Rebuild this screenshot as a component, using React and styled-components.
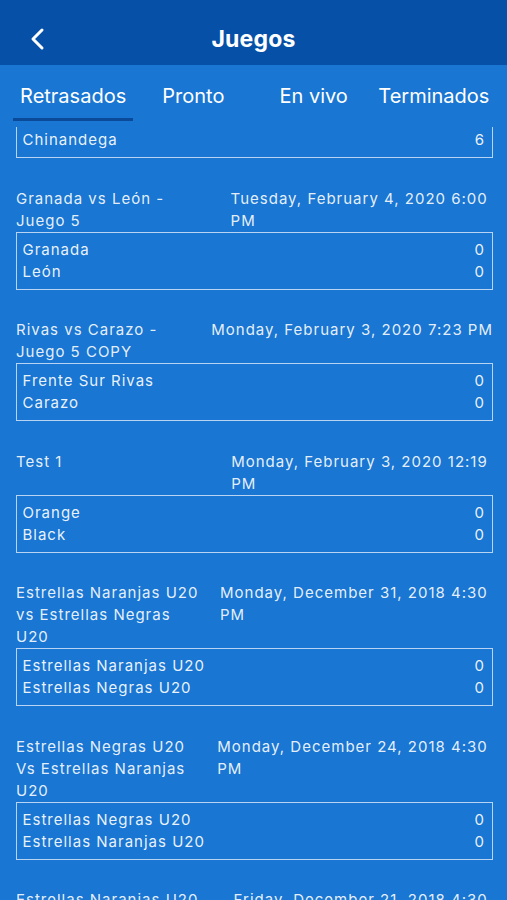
import React from "react";
import styled, { createGlobalStyle } from "styled-components";

const GlobalStyle = createGlobalStyle`
  html, body { margin: 0; padding: 0; }
  body {
    background: #1976d2;
    font-family: Inter, "Noto Sans", "Liberation Sans", sans-serif;
    -webkit-font-smoothing: antialiased;
  }
`;

const Screen = styled.div`
  width: 507px;
  height: 900px;
  overflow: hidden;
  background: #1976d2;
  display: flex;
  flex-direction: column;
`;

const Header = styled.header`
  height: 65px;
  flex-shrink: 0;
  box-sizing: border-box;
  padding-top: 13px;
  background: #0650a8;
  display: grid;
  grid-template-columns: 60px 1fr 60px;
  align-items: center;
`;

const BackButton = styled.button`
  background: none;
  border: none;
  padding: 0 0 0 30px;
  height: 100%;
  display: flex;
  align-items: center;
  cursor: pointer;
`;

const Title = styled.h1`
  margin: 0;
  text-align: center;
  color: #fff;
  font-size: 23px;
  font-weight: 700;
  letter-spacing: 0.2px;
`;

const Tabs = styled.nav`
  flex-shrink: 0;
  height: 62px;
  display: flex;
  padding: 0 13px;
  box-sizing: border-box;
`;

const Tab = styled.div`
  width: 121px;
  height: 56px;
  display: flex;
  align-items: center;
  justify-content: center;
  padding-top: 8px;
  box-sizing: border-box;
  color: #fff;
  font-size: 20px;
  font-weight: 400;
  border-bottom: 3px solid ${(p) => (p.$active ? "#0b4a98" : "transparent")};
`;

const List = styled.div`
  flex: 1;
  overflow: hidden;
  padding: 0 14px 0 16px;
`;

const Item = styled.section`
  margin-bottom: 29.5px;
`;

const ItemHead = styled.div`
  display: flex;
  align-items: flex-start;
`;

const TextBlock = styled.div`
  color: rgba(255, 255, 255, 0.9);
  font-size: 15px;
  line-height: 22px;
  letter-spacing: 1px;
  white-space: pre;
`;

const DateBlock = styled(TextBlock)`
  margin-left: auto;
`;

const Card = styled.div`
  border: 1.5px solid rgba(225, 236, 250, 0.8);
  border-top-width: ${(p) => (p.$clipped ? "0" : "1.5px")};
  padding: ${(p) => (p.$clipped ? "2px" : "6px")} 7px 6px 5.5px;
`;

const Row = styled.div`
  display: flex;
  justify-content: space-between;
  color: rgba(255, 255, 255, 0.92);
  font-size: 15px;
  line-height: 22px;
  letter-spacing: 1px;
`;

const Chevron = () => (
  <svg width="16" height="24" viewBox="0 0 16 24" fill="none">
    <polyline
      points="12,3 3,12 12,21"
      stroke="#fff"
      strokeWidth="3"
      strokeLinecap="round"
      strokeLinejoin="round"
    />
  </svg>
);

const games = [
  {
    title: ["Granada vs León -", "Juego 5"],
    date: ["Tuesday, February 4, 2020 6:00 ", "PM"],
    teams: [["Granada", 0], ["León", 0]],
  },
  {
    title: ["Rivas vs Carazo -", "Juego 5 COPY"],
    date: ["Monday, February 3, 2020 7:23 PM"],
    teams: [["Frente Sur Rivas", 0], ["Carazo", 0]],
  },
  {
    title: ["Test 1"],
    date: ["Monday, February 3, 2020 12:19 ", "PM"],
    teams: [["Orange", 0], ["Black", 0]],
  },
  {
    title: ["Estrellas Naranjas U20", "vs Estrellas Negras", "U20"],
    date: ["Monday, December 31, 2018 4:30 ", "PM"],
    teams: [["Estrellas Naranjas U20", 0], ["Estrellas Negras U20", 0]],
  },
  {
    title: ["Estrellas Negras U20", "Vs Estrellas Naranjas", "U20"],
    date: ["Monday, December 24, 2018 4:30 ", "PM"],
    teams: [["Estrellas Negras U20", 0], ["Estrellas Naranjas U20", 0]],
  },
  {
    title: ["Estrellas Naranjas U20", "vs Estrellas Negras", "U20"],
    date: ["Friday, December 21, 2018 4:30 ", "PM"],
    teams: [["Estrellas Naranjas U20", 0], ["Estrellas Negras U20", 0]],
  },
];

export default function App() {
  return (
    <>
      <GlobalStyle />
      <Screen>
        <Header>
          <BackButton aria-label="Atrás">
            <Chevron />
          </BackButton>
          <Title>Juegos</Title>
          <span />
        </Header>
        <Tabs>
          <Tab $active>Retrasados</Tab>
          <Tab>Pronto</Tab>
          <Tab>En vivo</Tab>
          <Tab>Terminados</Tab>
        </Tabs>
        <List>
          <Item>
            <Card $clipped>
              <Row>
                <span>Chinandega</span>
                <span>6</span>
              </Row>
            </Card>
          </Item>
          {games.map((g, i) => (
            <Item key={i}>
              <ItemHead>
                <TextBlock>{g.title.join("\n")}</TextBlock>
                <DateBlock>{g.date.join("\n")}</DateBlock>
              </ItemHead>
              <Card>
                {g.teams.map(([name, score]) => (
                  <Row key={name}>
                    <span>{name}</span>
                    <span>{score}</span>
                  </Row>
                ))}
              </Card>
            </Item>
          ))}
        </List>
      </Screen>
    </>
  );
}
